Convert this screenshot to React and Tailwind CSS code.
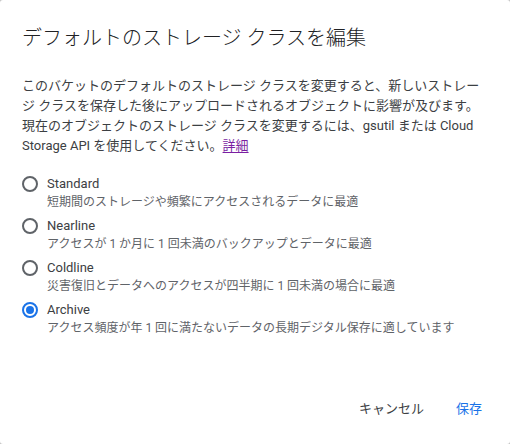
const options = [
  { id: "standard", label: "Standard", detail: "短期間のストレージや頻繁にアクセスされるデータに最適" },
  { id: "nearline", label: "Nearline", detail: "アクセスが 1 か月に 1 回未満のバックアップとデータに最適" },
  { id: "coldline", label: "Coldline", detail: "災害復旧とデータへのアクセスが四半期に 1 回未満の場合に最適" },
  { id: "archive", label: "Archive", detail: "アクセス頻度が年 1 回に満たないデータの長期デジタル保存に適しています" },
];

function Radio({ checked }) {
  return (
    <span
      className={
        checked
          ? "flex w-4 h-4 shrink-0 items-center justify-center rounded-full border-2 border-[#1a73e8]"
          : "flex w-4 h-4 shrink-0 items-center justify-center rounded-full border-2 border-[#5f6368]"
      }
    >
      {checked && <span className="w-2 h-2 rounded-full bg-[#1a73e8]" />}
    </span>
  );
}

export default function App() {
  const selected = "archive";

  return (
    <div
      className="w-[510px] h-[444px] bg-[#c4c4c4]"
      style={{ fontFamily: "Roboto, 'Noto Sans CJK JP', sans-serif" }}
    >
      <div className="w-full h-full bg-white rounded-[3px] flex flex-col px-[22px] pt-[24px]">
        <h2 className="text-[20px] leading-[28px] text-[#202124] font-light">
          デフォルトのストレージ クラスを編集
        </h2>

        <p className="mt-[24px] text-[13px] leading-[20px] text-[#3c4043] w-[462px]">
          このバケットのデフォルトのストレージ クラスを変更すると、新しいストレージ
          クラスを保存した後にアップロードされるオブジェクトに影響が及びます。現在のオブジェクトのストレージ
          クラスを変更するには、gsutil または Cloud Storage API を使用してください。
          <a href="#" className="text-[#7b1fa2] underline underline-offset-2">
            詳細
          </a>
        </p>

        <ul className="mt-[19px] flex flex-col gap-[6px]">
          {options.map((opt) => (
            <li key={opt.id}>
              <div className="flex items-center gap-[9px]">
                <Radio checked={opt.id === selected} />
                <span className="text-[13px] leading-[18px] text-[#3c4043]">{opt.label}</span>
              </div>
              <div className="pl-[25px] text-[12px] leading-[18px] text-[#5f6368]">
                {opt.detail}
              </div>
            </li>
          ))}
        </ul>

        <div className="mt-auto mb-[17px] -mr-[10px] flex justify-end">
          <button className="px-4 h-[36px] text-[13px] text-[#3c4043]">キャンセル</button>
          <button className="px-4 h-[36px] text-[13px] text-[#1a73e8]">保存</button>
        </div>
      </div>
    </div>
  );
}
